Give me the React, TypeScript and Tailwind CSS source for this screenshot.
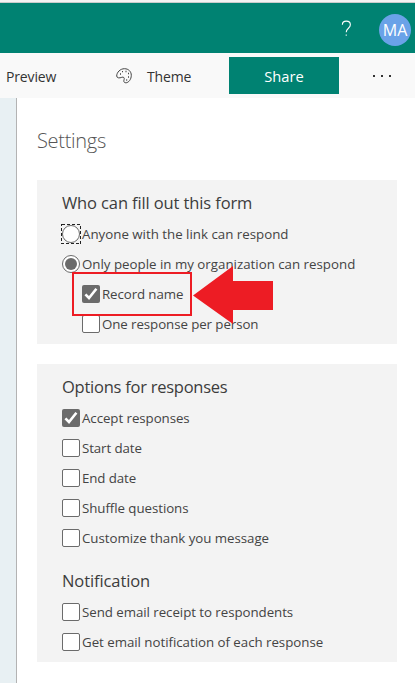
import type { ReactNode } from "react";

function Check({ on }: { on?: boolean }) {
  return on ? (
    <span className="flex size-[18px] shrink-0 items-center justify-center rounded-[2px] bg-[#6b6b6b]">
      <svg viewBox="0 0 18 18" className="size-[18px]" fill="none" stroke="#fff" strokeWidth="2.6">
        <path d="M3.4 9.3 7 13 14.4 3.8" />
      </svg>
    </span>
  ) : (
    <span className="size-[18px] shrink-0 rounded-[2px] border border-[#6b6b6b] bg-white" />
  );
}

function Radio({ on, focused }: { on?: boolean; focused?: boolean }) {
  return (
    <span className="relative flex size-[18px] shrink-0 items-center justify-center rounded-full border border-[#6b6b6b] bg-white">
      {on && <span className="size-3 rounded-full bg-[#6b6b6b]" />}
      {focused && (
        <svg viewBox="0 0 20 20" className="absolute -left-[2px] -top-[2px] size-5" fill="none" stroke="#222" shapeRendering="crispEdges">
          <rect x="0.5" y="0.5" width="19" height="19" strokeDasharray="3 2" />
        </svg>
      )}
    </span>
  );
}

function Row({ control, label, className = "" }: { control: ReactNode; label: string; className?: string }) {
  return (
    <div className="flex h-[30px] items-center gap-[2px]">
      {control}
      <span className={`whitespace-nowrap text-[13.3px] leading-5 text-[#444] ${className}`}>{label}</span>
    </div>
  );
}

function Heading({ children, className = "" }: { children: ReactNode; className?: string }) {
  return <h2 className={`whitespace-nowrap text-[16.5px] leading-6 text-[#3c3c3c] ${className}`}>{children}</h2>;
}

export default function App() {
  return (
    <div className="relative flex h-[683px] w-[415px] flex-col overflow-hidden bg-white font-['Open_Sans','Noto_Sans',sans-serif]">
      <div className="h-[3px] shrink-0 border-b border-[#c9cccc] bg-[#f3f3f3]" />
      <header className="flex h-[50px] shrink-0 items-center justify-end bg-[#008272] pr-1 pt-1 text-white">
        <svg viewBox="0 0 12 18" className="mb-[3px] mr-[27px] h-[17px] w-[11px]" fill="none" stroke="#fff" strokeWidth="1.2">
          <path d="M1.5 5C1.5 2.3 3.4 1 5.8 1s4.4 1.5 4.4 4c0 3.8-4.5 3.7-4.5 8.200" />
          <path d="M5.700 15.500v1.500" />
        </svg>
        <div className="flex size-8 items-center justify-center rounded-full bg-[#6aa2e8] text-[16px] font-medium">MA</div>
      </header>
      <nav className="flex h-[45px] shrink-0 items-center bg-[#f9f9f9] text-[14px] text-[#333]">
        <span className="ml-[6px] w-[110px] pt-[2px] tracking-[-0.01em]">Preview</span>
        <svg viewBox="0 0 16 16" className="size-4" fill="none" stroke="#444" strokeWidth="1">
          <path d="M8.500.7C12.500.7 15.300 3.600 15.300 7.300c0 4-2.700 7.500-5.500 7.500-2 0-2.300-1.600-1.700-3.200.7-1.800-.7-3-2.300-2.300C3.500 10.400.7 10 .7 8 .7 4.400 4.200.7 8.500.7Z" />
          <path d="M4 6h1M6 3.700h1M9.500 3.500h1M12 5.500h1M12 9h1M10.200 12h1" strokeWidth="1.300" />
        </svg>
        <span className="ml-[15px] w-[82px] pt-[2px] tracking-[-0.01em]">Theme</span>
        <button className="h-[37px] w-[110px] bg-[#008272] pt-[2px] text-[14.7px] text-white">Share</button>
        <span className="ml-[34px] flex gap-[6px]">
          <i className="size-[2px] bg-[#333]" />
          <i className="size-[2px] bg-[#333]" />
          <i className="size-[2px] bg-[#333]" />
        </span>
      </nav>
      <div className="flex min-h-0 flex-1">
        <aside className="w-[17px] shrink-0 border-r border-[#b3b3b3] bg-[#e8f0f3]" />
        <main className="flex flex-1 flex-col pl-5 pr-[18px]">
          <h1 className="mt-[29px] h-[53px] text-[20px] font-light leading-7 tracking-[-0.015em] text-[#555]">Settings</h1>
          <section className="h-[164px] bg-[#f3f3f3] pl-[25px] pt-[11px]">
            <Heading className="tracking-[-0.12px]">Who can fill out this form</Heading>
            <div className="mt-1">
              <Row control={<Radio focused />} label="Anyone with the link can respond" />
              <Row control={<Radio on />} label="Only people in my organization can respond" />
              <div className="pl-5">
                <Row control={<Check on />} label="Record name" className="tracking-[-0.1px]" />
                <Row control={<Check />} label="One response per person" className="tracking-[-0.08px]" />
              </div>
            </div>
          </section>
          <section className="mt-5 h-[298px] bg-[#f3f3f3] pl-[25px] pt-[11px]">
            <Heading className="tracking-[-0.25px]">Options for responses</Heading>
            <div className="mb-4 mt-1">
              <Row control={<Check on />} label="Accept responses" className="tracking-[-0.06px]" />
              <Row control={<Check />} label="Start date" className="tracking-[-0.1px]" />
              <Row control={<Check />} label="End date" className="tracking-[-0.1px]" />
              <Row control={<Check />} label="Shuffle questions" className="tracking-[-0.06px]" />
              <Row control={<Check />} label="Customize thank you message" className="tracking-[-0.04px]" />
            </div>
            <Heading className="tracking-[-0.1px]">Notification</Heading>
            <div className="mt-1">
              <Row control={<Check />} label="Send email receipt to respondents" className="tracking-[-0.05px]" />
              <Row control={<Check />} label="Get email notification of each response" className="tracking-[-0.03px]" />
            </div>
          </section>
        </main>
      </div>
      <div className="absolute left-[72px] top-[272px] h-[44px] w-[120px] border-2 border-[#ed1c24]" />
      <svg viewBox="0 0 80 58" className="absolute left-[193px] top-[266px] h-[58px] w-20" fill="#ed1c24">
        <path d="M0 29.500 40 0V15H80V44H40V58Z" />
      </svg>
    </div>
  );
}
